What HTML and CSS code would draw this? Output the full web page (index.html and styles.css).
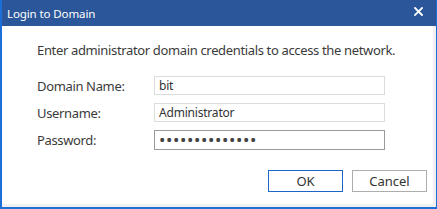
FILE: index.html
```html
<!DOCTYPE html>
<html>
<head>
<meta charset="utf-8">
<link rel="stylesheet" href="styles.css">
</head>
<body>
<div class="window">
  <div class="titlebar">
    <span class="title">Login to Domain</span>
    <svg class="close" width="9" height="9" viewBox="0 0 9 9"><path d="M1 1L8 8M8 1L1 8" stroke="#fff" stroke-width="1.8" stroke-linecap="square"/></svg>
  </div>
  <div class="content">
    <p class="intro">Enter administrator domain credentials to access the network.</p>
    <div class="form">
      <label class="label">Domain Name:</label>
      <div class="field">bit</div>
      <label class="label">Username:</label>
      <div class="field">Administrator</div>
      <label class="label">Password:</label>
      <div class="field field-pass">••••••••••••••</div>
    </div>
    <div class="buttons">
      <div class="btn btn-ok">OK</div>
      <div class="btn">Cancel</div>
    </div>
  </div>
</div>
</body>
</html>
```

FILE: styles.css
```css
html, body {
  margin: 0;
  padding: 0;
  background: #ffffff;
}
.window {
  width: 437px;
  height: 209px;
  box-sizing: border-box;
  border: 1px solid #1b6fd6;
  border-top: none;
  border-left-width: 2px;
  border-bottom-width: 2px;
  display: flex;
  flex-direction: column;
  font-family: "Noto Sans", "Open Sans", sans-serif;
  color: #333333;
  overflow: hidden;
}
.titlebar {
  height: 26px;
  background: #2b579a;
  display: flex;
  align-items: center;
  justify-content: space-between;
  padding: 0 14px 0 7px;
  margin-left: -2px;
  margin-right: -1px;
  flex-shrink: 0;
}
.title {
  color: #ffffff;
  font-size: 11.5px;
  padding-top: 1px;
  letter-spacing: -0.1px;
}
.close {
  display: block;
  margin-top: -4px;
}
.content {
  flex: 1;
  background: #ffffff;
  border-right: 3px solid #f0f0f0;
  border-bottom: 3px solid #f0f0f0;
  padding: 0 0 0 35px;
  display: flex;
  flex-direction: column;
}
.intro {
  margin: 15px 0 0 0;
  font-size: 13px;
  line-height: 18px;
  letter-spacing: -0.35px;
  color: #3b3b3b;
}
.form {
  margin-top: 17px;
  display: grid;
  grid-template-columns: 117px 231px;
  row-gap: 8px;
  align-items: center;
}
.label {
  font-size: 13px;
  letter-spacing: -0.35px;
  color: #3b3b3b;
}
.field {
  height: 19px;
  box-sizing: border-box;
  border: 1px solid #dcdcdc;
  font-size: 12px;
  line-height: 17px;
  padding-left: 4px;
  letter-spacing: -0.2px;
  color: #333333;
}
.field-pass {
  height: 20px;
  border-color: #9a9a9a;
  font-size: 17px;
  line-height: 18px;
  letter-spacing: 0.6px;
  color: #444444;
}
.buttons {
  margin-top: 20px;
  display: flex;
  justify-content: flex-end;
  gap: 9px;
  padding-right: 6px;
}
.btn {
  width: 75px;
  height: 22px;
  box-sizing: border-box;
  border: 1px solid #adadad;
  display: flex;
  align-items: center;
  justify-content: center;
  font-size: 13px;
  color: #333333;
  background: #ffffff;
}
.btn-ok {
  border-color: #1e66c6;
}
```
